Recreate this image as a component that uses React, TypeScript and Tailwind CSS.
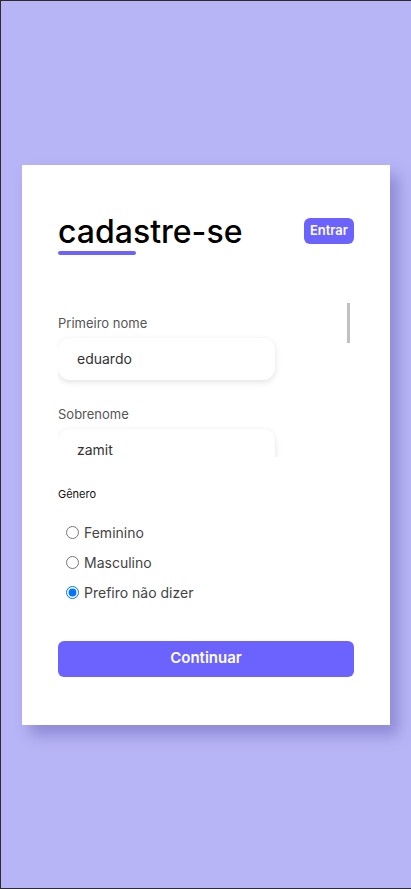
import React from "react";

const options = ["Feminino", "Masculino", "Prefiro não dizer"];

function Field({ label, value }: { label: string; value: string }) {
  return (
    <div className="flex flex-col">
      <label className="text-[13px] leading-4 text-[#555]">{label}</label>
      <div className="mt-[7px] flex h-[42px] w-[217px] items-center rounded-xl bg-white pl-[19px] text-[14px] text-[#333] shadow-[0_2px_6px_rgba(0,0,0,0.12)]">
        {value}
      </div>
    </div>
  );
}

export default function App() {
  return (
    <div className="flex min-h-[889px] items-center justify-center border-b border-l border-t border-[#2b2b2b] bg-[#b7b5f6] font-['Inter',sans-serif]">
      <div className="flex h-[560px] w-[368px] flex-col bg-white px-9 pt-12 shadow-[8px_10px_14px_rgba(90,85,170,0.45)]">
        <div className="flex items-start justify-between">
          <div>
            <h1 className="text-[32px] leading-[38px] font-medium text-black">cadastre-se</h1>
            <div className="h-1 w-[78px] rounded-full bg-[#6c63ff]" />
          </div>
          <button className="mt-[5px] h-[26px] rounded-md bg-[#6c63ff] px-[6px] text-[13px] font-semibold text-white">
            Entrar
          </button>
        </div>

        <div className="relative mt-[46px] h-[156px] overflow-hidden">
          <div className="absolute right-[4px] top-[2px] h-10 w-[3px] bg-[#c1c1c1]" />
          <div className="flex flex-col gap-[26px] pt-[14px]">
            <Field label="Primeiro nome" value="eduardo" />
            <Field label="Sobrenome" value="zamit" />
          </div>
        </div>

        <p className="mt-[29px] text-[11px] leading-4 text-[#111]">Gênero</p>

        <div className="mt-[22px] flex flex-col gap-[12px] pl-2">
          {options.map((o, i) => (
            <label key={o} className="flex h-[18px] items-center gap-[5px] text-[14px] text-[#444]">
              <input type="radio" name="genero" defaultChecked={i === 2} className="m-0 h-[13px] w-[13px]" />
              {o}
            </label>
          ))}
        </div>

        <button className="mt-[39px] h-9 w-full rounded-md bg-[#6c63ff] text-[15px] font-semibold text-white">
          Continuar
        </button>
      </div>
    </div>
  );
}
